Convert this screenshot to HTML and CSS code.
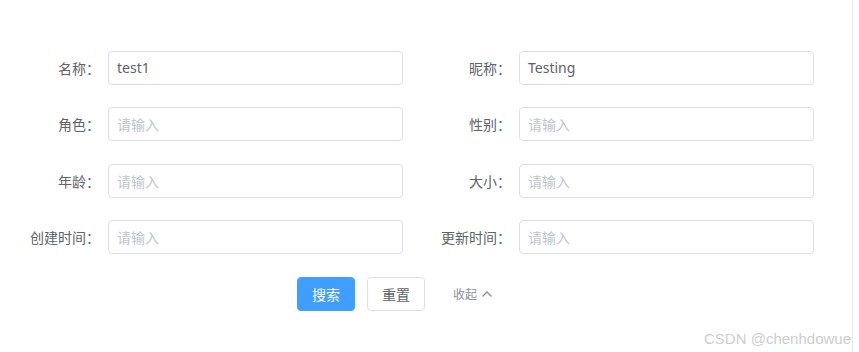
FILE: index.html
```html
<!DOCTYPE html>
<html lang="zh-CN">
<head>
<meta charset="utf-8">
<title>搜索表单</title>
<link rel="stylesheet" href="styles.css">
</head>
<body>
<div class="page">
  <form class="search-form">
    <div class="grid">
      <div class="item"><label class="label">名称：</label><div class="input">test1</div></div>
      <div class="item"><label class="label">昵称：</label><div class="input">Testing</div></div>
      <div class="item"><label class="label">角色：</label><div class="input placeholder">请输入</div></div>
      <div class="item"><label class="label">性别：</label><div class="input placeholder">请输入</div></div>
      <div class="item"><label class="label">年龄：</label><div class="input placeholder">请输入</div></div>
      <div class="item"><label class="label">大小：</label><div class="input placeholder">请输入</div></div>
      <div class="item"><label class="label">创建时间：</label><div class="input placeholder">请输入</div></div>
      <div class="item"><label class="label">更新时间：</label><div class="input placeholder">请输入</div></div>
    </div>
    <div class="actions">
      <button type="button" class="btn btn-primary">搜索</button>
      <button type="button" class="btn">重置</button>
      <span class="collapse">收起<svg class="chev" width="12" height="8" viewBox="0 0 12 8"><polyline points="1.5,6.5 6,2 10.5,6.5" fill="none" stroke="#8c8f96" stroke-width="1.4"/></svg></span>
    </div>
  </form>
  <div class="watermark">CSDN @chenhdowue</div>
</div>
</body>
</html>
```
FILE: styles.css
```css
html, body {
  margin: 0;
  padding: 0;
  background: #fff;
}
body {
  font-family: "Noto Sans", "Noto Sans CJK SC", sans-serif;
  color: #606266;
}
.page {
  position: relative;
  width: 853px;
  height: 352px;
  box-sizing: border-box;
  border-right: 1px solid #e4e9f3;
  padding-top: 51px;
}
.grid {
  display: grid;
  grid-template-columns: 403px 403px;
  column-gap: 8px;
  row-gap: 22.3px;
}
.item {
  display: flex;
  align-items: center;
  height: 34px;
}
.label {
  flex: 0 0 108px;
  box-sizing: border-box;
  padding-right: 8px;
  text-align: right;
  font-size: 14px;
  color: #606266;
  font-family: "Noto Sans CJK SC", sans-serif;
}
.input {
  flex: 0 0 295px;
  box-sizing: border-box;
  height: 34px;
  border: 1px solid #dcdfe6;
  border-radius: 4px;
  padding: 0 8px;
  line-height: 32px;
  font-size: 14px;
  color: #606266;
}
.placeholder {
  color: #c0c4cc;
  font-family: "Noto Sans CJK SC", sans-serif;
}
.actions {
  display: flex;
  align-items: center;
  margin-top: 23px;
  padding-left: 297px;
}
.btn {
  height: 34px;
  padding: 0 14px;
  box-sizing: border-box;
  border: 1px solid #dcdfe6;
  border-radius: 4px;
  background: #fff;
  color: #606266;
  font-size: 14px;
  font-family: "Noto Sans CJK SC", sans-serif;
  line-height: 32px;
  margin-right: 12px;
}
.btn-primary {
  background: #409eff;
  border-color: #409eff;
  color: #fff;
}
.collapse {
  display: flex;
  align-items: center;
  margin-left: 16px;
  font-size: 12px;
  color: #8c8f96;
  font-family: "Noto Sans CJK SC", sans-serif;
}
.chev {
  margin-left: 4px;
}
.watermark {
  position: absolute;
  right: 1px;
  bottom: 5px;
  font-family: "Liberation Sans", Arial, sans-serif;
  font-size: 15px;
  color: #cdcdcd;
  white-space: nowrap;
}
```
